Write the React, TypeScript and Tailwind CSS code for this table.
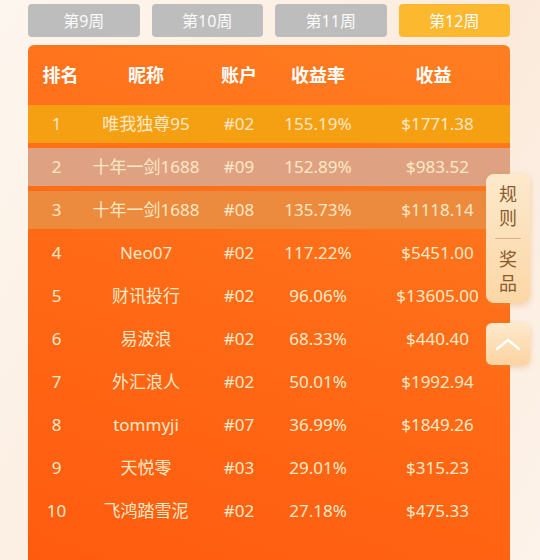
import React from 'react';

const weeks = ['第9周', '第10周', '第11周', '第12周'];

const rows = [
  ['1', '唯我独尊95', '#02', '155.19%', '$1771.38'],
  ['2', '十年一剑1688', '#09', '152.89%', '$983.52'],
  ['3', '十年一剑1688', '#08', '135.73%', '$1118.14'],
  ['4', 'Neo07', '#02', '117.22%', '$5451.00'],
  ['5', '财讯投行', '#02', '96.06%', '$13605.00'],
  ['6', '易波浪', '#02', '68.33%', '$440.40'],
  ['7', '外汇浪人', '#02', '50.01%', '$1992.94'],
  ['8', 'tommyji', '#07', '36.99%', '$1849.26'],
  ['9', '天悦零', '#03', '29.01%', '$315.23'],
  ['10', '飞鸿踏雪泥', '#02', '27.18%', '$475.33'],
];

// top three rows get their own tint
const rowBg = ['bg-[#f5a013]', 'bg-[#dea283]', 'bg-[#ec8a3d]'];

const cols = 'grid grid-cols-[57px_122px_64px_94px_145px] items-center text-center';

export default function App() {
  return (
    <div
      className="relative h-[560px] w-[540px] overflow-hidden bg-[#fcefe3]"
      style={{ fontFamily: '"Noto Sans", "Noto Sans CJK SC", sans-serif' }}
    >
      {/* soft diagonal light shapes in the backdrop */}
      <div className="absolute inset-0 bg-[linear-gradient(120deg,#fdf6ee_0%,#fcefe3_40%,#fbeadb_60%,#fdf3ea_100%)]" />

      <div className="relative px-[28px] pt-[4px]">
        {/* week tabs */}
        <div className="flex w-[482px] gap-[12px]">
          {weeks.map((w, i) => (
            <div
              key={w}
              className={`flex h-[33px] flex-1 items-center justify-center rounded-[4px] text-[16px] text-[#fafafa] ${
                i === 3 ? 'bg-[#fcb82e]' : 'bg-[#bdbdbd]'
              }`}
            >
              {w}
            </div>
          ))}
        </div>

        {/* ranking panel */}
        <div className="mt-[8px] h-[540px] w-[482px] overflow-hidden rounded-t-[6px] bg-[linear-gradient(200deg,#ff7e22_0%,#ff6a16_50%,#ff5a0e_100%)]">
          <div className={`${cols} h-[60px] text-[18px] font-bold text-white`}>
            <div className="pl-[8px]">排名</div>
            <div>昵称</div>
            <div>账户</div>
            <div>收益率</div>
            <div className="pr-[8px]">收益</div>
          </div>

          <div className="flex flex-col gap-[5px]">
            {rows.map((r, i) => (
              <div
                key={i}
                className={`${cols} h-[38px] text-[17px] text-[#ffe8c6] ${rowBg[i] ?? ''}`}
              >
                {r.map((c, j) => (
                  <div key={j}>{c}</div>
                ))}
              </div>
            ))}
          </div>
        </div>
      </div>

      {/* floating side buttons */}
      <div className="absolute left-[486px] top-[174px] flex w-[44px] flex-col items-center rounded-[8px] bg-[linear-gradient(180deg,#fde9cc,#fcd7a6)] py-[8px] text-[18px] leading-[24px] text-[#8a5a2c] shadow-[0_2px_6px_rgba(220,140,60,0.35)]">
        <span>规</span>
        <span>则</span>
        <div className="my-[8px] h-px w-[26px] bg-[#d9b48a]" />
        <span>奖</span>
        <span>品</span>
      </div>
      <div className="absolute left-[486px] top-[323px] flex h-[42px] w-[44px] items-center justify-center rounded-[6px] bg-[linear-gradient(180deg,#fde9cc,#fcd3a0)] shadow-[0_2px_6px_rgba(220,140,60,0.35)]">
        <svg width="26" height="14" viewBox="0 0 26 14" fill="none">
          <path d="M2 12 L13 3 L24 12" stroke="#ffffff" strokeWidth="2.5" strokeLinecap="round" strokeLinejoin="round" />
        </svg>
      </div>
    </div>
  );
}
